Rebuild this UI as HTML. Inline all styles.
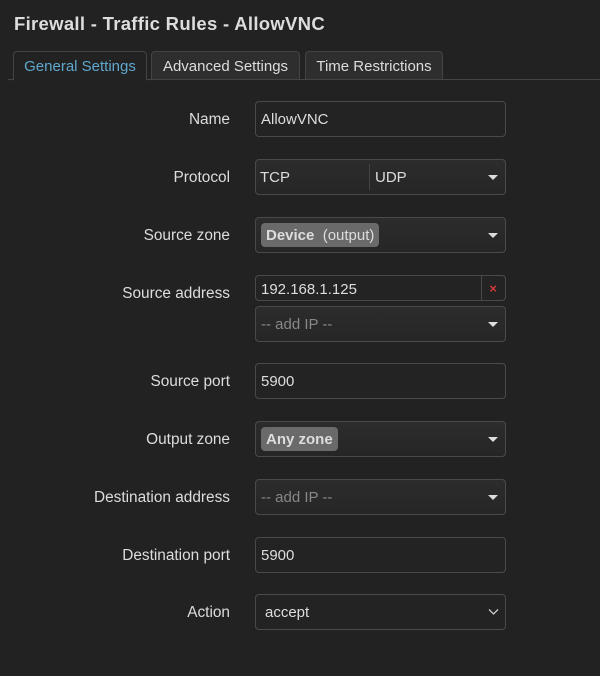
<!DOCTYPE html>
<html><head><meta charset="utf-8"><style>
html,body{margin:0;padding:0;background:#222;width:600px;height:676px;overflow:hidden;font-family:"Liberation Sans",Arial,sans-serif;color:#ddd}
.t{position:absolute;left:14px;top:13px;font-size:18.5px;font-weight:bold;color:#ddd;letter-spacing:0.3px}
.tab{position:absolute;top:51px;height:27px;border:1px solid #444;border-bottom:none;border-radius:4px 4px 0 0;background:#2e2e2e;font-size:15px;line-height:29px;text-align:center;color:#ddd}
.tab.a{background:#222;color:#5fa8cf;height:28px}
.line{position:absolute;left:8px;right:0;top:79px;border-top:1px solid #444}
.lab{position:absolute;right:370px;font-size:15.4px;color:#ddd;text-align:right;white-space:nowrap}
.f{position:absolute;left:255px;width:249px;height:34px;border:1px solid #4a4a4a;border-radius:4px;background:#232323;box-sizing:content-box;font-size:15px;color:#ddd}
.f span.v{position:absolute;left:5px;top:9px}
.g{background:linear-gradient(#2c2c2c,#262626)}
.arr{position:absolute;right:7px;top:15px;width:0;height:0;border-left:5px solid transparent;border-right:5px solid transparent;border-top:5px solid #ddd}
.pill{position:absolute;left:5px;top:5px;height:24px;line-height:26px;background:#6a6a6a;border-radius:4px;padding:0 5px;font-weight:bold;color:#ddd}
.ph{color:#888}
</style></head><body>
<div class="t">Firewall - Traffic Rules - AllowVNC</div>
<div class="tab" style="left:151px;width:147px">Advanced Settings</div>
<div class="tab" style="left:305px;width:136px">Time Restrictions</div>
<div class="line"></div>
<div class="tab a" style="left:13px;width:132px;border-bottom:1px solid #222;height:28px">General Settings</div>

<div class="lab" style="top:111px">Name</div>
<div class="f" style="top:101px"><span class="v">AllowVNC</span></div>

<div class="lab" style="top:169px">Protocol</div>
<div class="f g" style="top:159px"><span class="v" style="left:4px">TCP</span><div style="position:absolute;left:113px;top:4px;height:26px;border-left:1px solid #444"></div><span class="v" style="left:119px">UDP</span><div class="arr"></div></div>

<div class="lab" style="top:227px">Source zone</div>
<div class="f g" style="top:217px"><div class="pill">Device <span style="font-weight:normal">&nbsp;(output)</span></div><div class="arr"></div></div>

<div class="lab" style="top:285px">Source address</div>
<div class="f" style="top:275px;height:24px"><span class="v" style="top:5px">192.168.1.125</span><div style="position:absolute;left:225px;top:0;height:24px;border-left:1px solid #4a4a4a"></div><span style="position:absolute;right:8px;top:5px;color:#d03a3a;font-weight:bold;font-size:13px">×</span></div>
<div class="f g" style="top:306px"><span class="v ph">-- add IP --</span><div class="arr"></div></div>

<div class="lab" style="top:373px">Source port</div>
<div class="f" style="top:363px"><span class="v">5900</span></div>

<div class="lab" style="top:431px">Output zone</div>
<div class="f g" style="top:421px"><div class="pill">Any zone</div><div class="arr"></div></div>

<div class="lab" style="top:489px">Destination address</div>
<div class="f g" style="top:479px"><span class="v ph">-- add IP --</span><div class="arr"></div></div>

<div class="lab" style="top:547px">Destination port</div>
<div class="f" style="top:537px"><span class="v">5900</span></div>

<div class="lab" style="top:604px">Action</div>
<div class="f" style="top:594px"><span class="v" style="left:9px">accept</span>
<svg style="position:absolute;right:6px;top:13px" width="11" height="8" viewBox="0 0 11 8"><path d="M1 1.5 L5.5 6 L10 1.5" fill="none" stroke="#ccc" stroke-width="1.3"/></svg></div>
</body></html>
